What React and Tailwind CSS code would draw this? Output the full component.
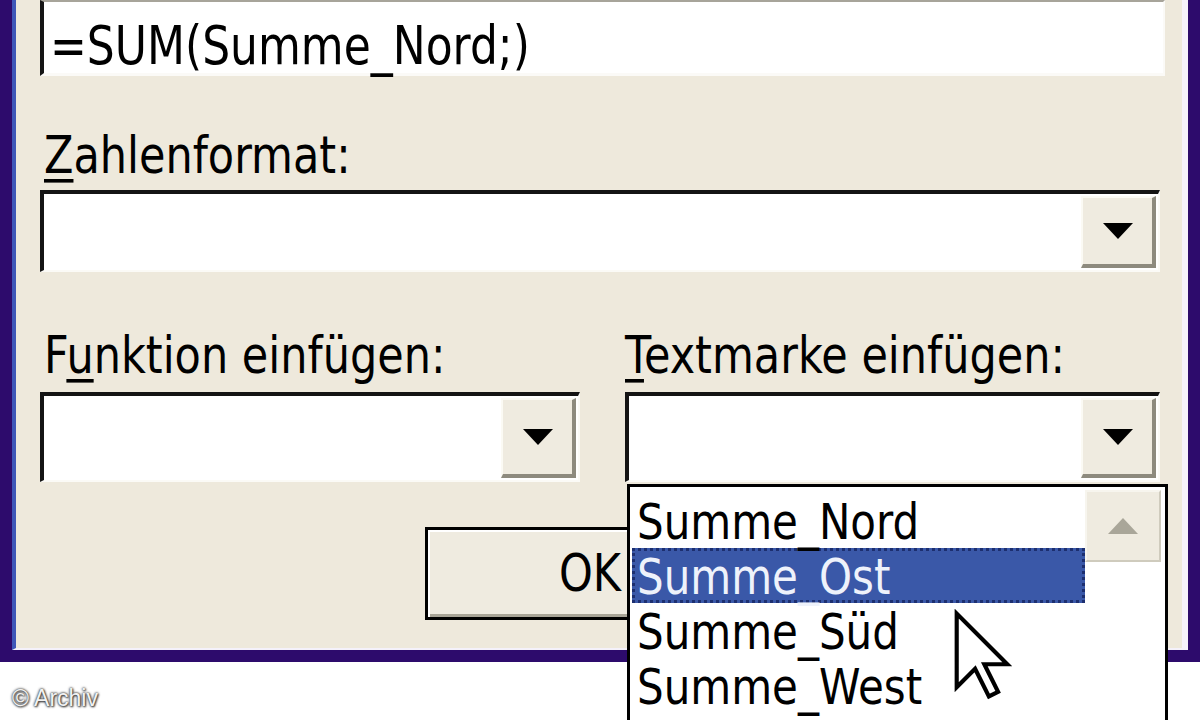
import React from "react";

// stretched Tahoma-ish text, like the enlarged XP dialog
const T = ({ children }) => (
  <span className="inline-block origin-center -translate-y-[10px] scale-y-[1.2] leading-[42px] whitespace-pre">
    {children}
  </span>
);

const Arrow = ({ color = "#000" }) => (
  <svg width="30" height="16" viewBox="0 0 30 16">
    <polygon points="0,0 30,0 15,16" fill={color} />
  </svg>
);

const Combo = ({ className }) => (
  <div
    className={`flex h-[90px] justify-end border-t-4 border-l-4 border-t-[#141414] border-l-[#141414] border-r-2 border-b-2 border-r-[#fbfaf6] border-b-[#fbfaf6] bg-white p-[2px] ${className || ""}`}
  >
    <div className="flex w-[75px] items-center justify-center border-t-2 border-l-2 border-t-[#fbfaf4] border-l-[#fbfaf4] border-r-4 border-b-4 border-r-[#8d8a7e] border-b-[#8d8a7e] bg-[#efebe0]">
      <Arrow />
    </div>
  </div>
);

export default function App() {
  return (
    <div className="relative h-[720px] w-[1200px] overflow-hidden bg-white font-['DejaVu_Sans',sans-serif] text-[43px] text-black">
      {/* dialog frame */}
      <div className="h-[662px] border-x-[12px] border-b-[12px] border-[#2d0b6c]">
        <div className="h-full border-l-4 border-l-[#3f57b8] border-r-[6px] border-r-[#f6f2fb] border-b-2 border-b-[#f4f1fa] bg-[#eee9dc] pl-6 pr-[22px]">
          {/* formula field */}
          <div className="-mr-[5px] h-[76px] border-t-2 border-t-[#a7a49a] border-l-4 border-l-[#151515] border-r-2 border-r-[#fbfaf7] border-b-[3px] border-b-[#fbfaf7] bg-white pl-[6px] pt-[21px] text-[44px]">
            <T>=SUM(Summe_Nord;)</T>
          </div>

          <div className="mt-[57px] h-[42px] pl-[4px]">
            <T>
              <span className="underline decoration-[3px] underline-offset-[5px]">Z</span>ahlenformat:
            </T>
          </div>

          <div className="mt-[15px] flex h-[82px] justify-end border-t-4 border-l-4 border-t-[#141414] border-l-[#141414] border-r-2 border-b-2 border-r-[#fbfaf6] border-b-[#fbfaf6] bg-white p-[2px]">
            <div className="flex w-[75px] items-center justify-center border-t-2 border-l-2 border-t-[#fbfaf4] border-l-[#fbfaf4] border-r-4 border-b-4 border-r-[#8d8a7e] border-b-[#8d8a7e] bg-[#efebe0]">
              <Arrow />
            </div>
          </div>

          <div className="mt-[61px] grid grid-cols-[540px_535px] gap-x-[45px]">
            <div className="flex flex-col">
              <div className="h-[42px] pl-[4px]">
                <T>
                  F<span className="underline decoration-[3px] underline-offset-[5px]">u</span>nktion einfügen:
                </T>
              </div>
              <Combo className="mt-[17px]" />
            </div>
            <div className="flex flex-col">
              <div className="h-[42px]">
                <T>
                  <span className="underline decoration-[3px] underline-offset-[5px]">T</span>extmarke einfügen:
                </T>
              </div>
              <Combo className="mt-[17px]" />
            </div>
          </div>

          <div className="mt-[45px] ml-[385px] flex h-[93px] w-[330px] items-center justify-center border-[3px] border-black bg-[#efebe0] pt-[18px] shadow-[inset_2px_2px_0_#ffffff,inset_-3px_-3px_0_#a9a597]">
            <T>OK</T>
          </div>
        </div>
      </div>

      {/* watermark */}
      <div className="pl-[12px] pt-[23px] font-['Liberation_Sans',Arial,sans-serif] text-[23px] leading-[26px] text-[#f2f2f2] [text-shadow:0_0_2px_#333,0_0_3px_#555,1px_1px_2px_#444]">
        © Archiv
      </div>

      {/* open dropdown list */}
      <div className="absolute left-[627px] top-[484px] flex h-[250px] w-[541px] border-[3px] border-black bg-white text-[42px]">
        <div className="flex w-[455px] flex-col pl-[2px] pt-[6px]">
          <div className="h-[55px] pl-[5px] pt-[7px]">
            <T>Summe_Nord</T>
          </div>
          <div className="h-[55px] border-[3px] border-dotted border-[#1d2f70] bg-[#3a58a8] pl-[2px] pt-[4px] text-[#eef2fb]">
            <T>Summe_Ost</T>
          </div>
          <div className="h-[55px] pl-[5px] pt-[7px]">
            <T>Summe_Süd</T>
          </div>
          <div className="h-[55px] pl-[5px] pt-[7px]">
            <T>Summe_West</T>
          </div>
        </div>
        <div className="flex flex-1 flex-col pr-[4px] pt-[3px]">
          <div className="flex h-[72px] items-center justify-center border-2 border-[#f7f5ee] border-b-[#cfcbbd] border-r-[#cfcbbd] bg-[#efebe0]">
            <svg width="30" height="16" viewBox="0 0 30 16">
              <polygon points="15,0 30,16 0,16" fill="#a9a699" />
            </svg>
          </div>
        </div>
      </div>

      {/* mouse pointer */}
      <svg
        className="absolute left-[952px] top-[609px]"
        width="60"
        height="92"
        viewBox="0 0 13 20"
      >
        <polygon
          points="1,1 1,17 5,13 8,19 10,18 7,12 12,12"
          fill="#ffffff"
          stroke="#000000"
          strokeWidth="0.9"
          strokeLinejoin="miter"
        />
      </svg>
    </div>
  );
}
